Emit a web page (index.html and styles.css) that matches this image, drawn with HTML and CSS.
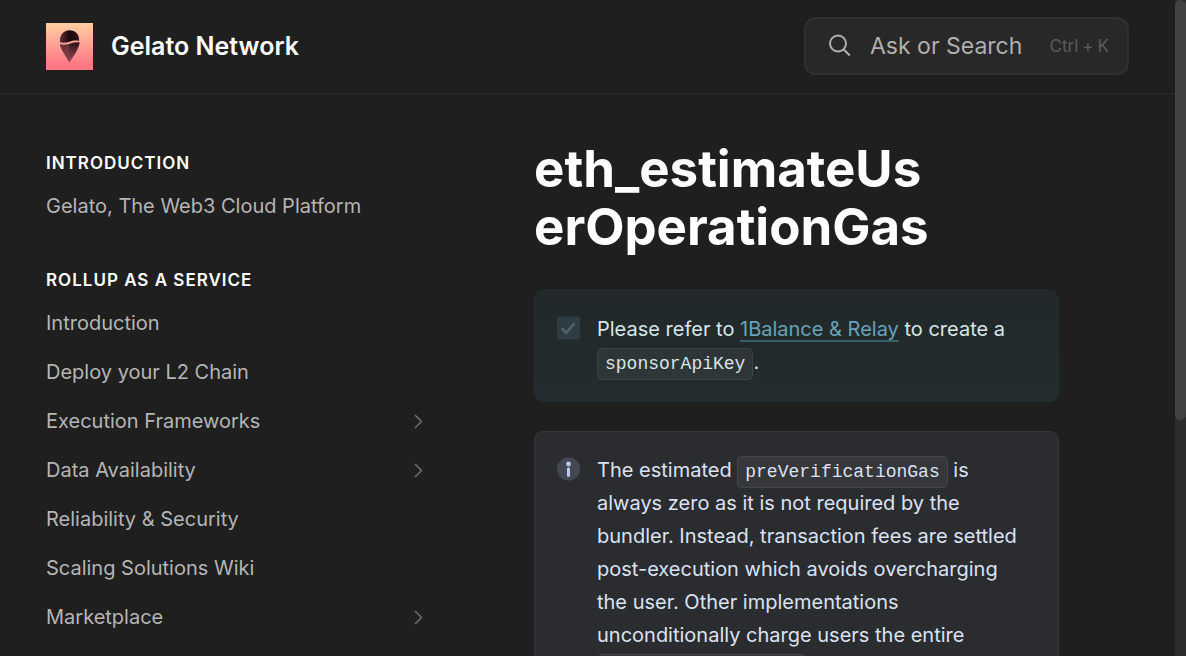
FILE: index.html
```html
<!DOCTYPE html>
<html lang="en">
<head>
<meta charset="utf-8">
<meta name="viewport" content="width=device-width, initial-scale=1">
<title>eth_estimateUserOperationGas | Gelato Network</title>
<link rel="stylesheet" href="styles.css">
</head>
<body>
<div class="page">
  <header class="header">
    <a class="brand" href="#">
      <svg class="logo" viewBox="0 0 47 47" aria-hidden="true">
        <defs>
          <linearGradient id="sky" x1="0" y1="0" x2="0" y2="1"><stop offset="0" stop-color="#ffcfa3"/><stop offset=".9" stop-color="#ff7685"/></linearGradient>
          <linearGradient id="scoop" x1="0" y1="0" x2="1" y2="0"><stop offset="0" stop-color="#5c3036"/><stop offset=".5" stop-color="#1c070c"/><stop offset="1" stop-color="#321419"/></linearGradient>
          <linearGradient id="cone" x1="0" y1="0" x2="0" y2="1"><stop offset="0" stop-color="#30151a"/><stop offset="1" stop-color="#9c4855"/></linearGradient>
        </defs>
        <path fill="url(#sky)" d="M0 0h47v47H0z"/>
        <path fill="url(#scoop)" d="M14 19.300C13.300 12.300 17.400 7.300 23.500 7.300s10 4.500 9.600 10.600c-4-.8-6.400-.2-9.600.9-3.600 1.200-6 1.300-9.500.5z"/>
        <path fill="url(#cone)" d="M14 21.200c4 1 7.300.5 10.500-.7 3.200-1.100 6-1.500 9.200-.9-.5 4.400-3.200 8.600-5.200 12.200L23.300 39.500 17.500 29.500c-1.700-3-3.200-5.500-3.500-8.300z"/>
        <path fill="#7d4148" opacity=".65" d="M14.500 21.500c3 .7 5.600.5 8.500-.4l.2 17.400-5.500-9.300c-1.600-2.700-2.900-5-3.200-7.700z"/>
      </svg>
      <span class="brand-name">Gelato Network</span>
    </a>
    <button class="search" type="button">
      <svg class="search-icon" viewBox="0 0 24 24" aria-hidden="true"><circle cx="10" cy="9.500" r="8"/><path d="m15.800 15.500 6 6"/></svg>
      <span class="search-label">Ask or Search</span>
      <span class="search-keys"><span>Ctrl</span><span>+</span><span>K</span></span>
    </button>
  </header>
  <div class="columns">
    <nav class="sidebar" aria-label="Documentation">
      <section class="group">
        <h2 class="group-title">INTRODUCTION</h2>
        <a class="nav-link" href="#">Gelato, The Web3 Cloud Platform</a>
      </section>
      <section class="group">
        <h2 class="group-title">ROLLUP AS A SERVICE</h2>
        <a class="nav-link" href="#">Introduction</a>
        <a class="nav-link" href="#">Deploy your L2 Chain</a>
        <a class="nav-link" href="#">Execution Frameworks<svg class="chevron" viewBox="0 0 9 15" aria-hidden="true"><path d="m1 1 6.500 6.500L1 14"/></svg></a>
        <a class="nav-link" href="#">Data Availability<svg class="chevron" viewBox="0 0 9 15" aria-hidden="true"><path d="m1 1 6.500 6.500L1 14"/></svg></a>
        <a class="nav-link" href="#">Reliability &amp; Security</a>
        <a class="nav-link" href="#">Scaling Solutions Wiki</a>
        <a class="nav-link" href="#">Marketplace<svg class="chevron" viewBox="0 0 9 15" aria-hidden="true"><path d="m1 1 6.500 6.500L1 14"/></svg></a>
      </section>
    </nav>
    <main class="content">
      <h1 class="title">eth_estimateUserOperationGas</h1>
      <div class="hint hint-success">
        <svg class="hint-icon" viewBox="0 0 24 24" aria-hidden="true"><rect width="24" height="24" rx="3" fill="#2d3d43"/><path d="m5 12.500 4.500 4.500 9-10" fill="none" stroke="#4b646c" stroke-width="2.800"/></svg>
        <p class="hint-text">Please refer to <a class="link" href="#">1Balance &amp; Relay</a> to create a <code class="code">sponsorApiKey</code>.</p>
      </div>
      <div class="hint hint-info">
        <svg class="hint-icon" viewBox="0 0 24 24" aria-hidden="true"><circle cx="12" cy="12" r="12" fill="#434852"/><circle cx="12" cy="6.800" r="2.500" fill="#b9ccec"/><rect x="10.400" y="10.500" width="3.200" height="9.500" rx="1.300" fill="#b9ccec"/></svg>
        <p class="hint-text">The estimated <code class="code">preVerificationGas</code> is always zero as it is not required by the bundler. Instead, transaction fees are settled post-execution which avoids overcharging the user. Other implementations unconditionally charge users the entire <code class="code">preVerificationGas</code></p>
      </div>
    </main>
  </div>
</div>
<div class="scroll-track" aria-hidden="true"><div class="scroll-thumb"></div></div>
</body>
</html>
```
FILE: styles.css
```css
* { box-sizing: border-box; }

body {
  margin: 0;
  height: 100vh;
  overflow: hidden;
  display: flex;
  background: #1f1f1f;
  color: #fff;
  font-family: Inter, "Liberation Sans", sans-serif;
  font-size: 20px;
}

a { color: inherit; text-decoration: none; }

.page { flex: 1; min-width: 0; }

.header {
  display: flex;
  align-items: center;
  justify-content: space-between;
  padding: 17px 46px 18px;
  border-bottom: 2px solid #262626;
}

.brand { display: flex; align-items: center; gap: 18px; }
.logo { width: 47px; height: 47px; }
.brand-name { font-size: 25px; font-weight: 600; line-height: 32px; }

.search {
  display: flex;
  align-items: center;
  width: 325px;
  height: 58px;
  padding: 0 18px 0 22px;
  border: 2px solid #303030;
  border-radius: 12px;
  background: #282828;
  color: #b0b0b0;
  font: inherit;
}
.search-icon { width: 24px; height: 24px; fill: none; stroke: currentColor; stroke-width: 2; }
.search-label { margin-left: 18px; font-size: 23px; }
.search-keys { display: flex; gap: 4px; margin-left: auto; color: #5c5c5c; font-size: 17px; }

.columns { display: flex; gap: 93px; padding: 45px 116px 0 46px; }

.sidebar { width: 395px; flex: none; padding-top: 10px; }
.group { margin-bottom: 36px; }
.group-title { margin: 0 0 6px; font-size: 17px; font-weight: 600; line-height: 26px; letter-spacing: 1px; }
.nav-link {
  display: flex;
  align-items: center;
  justify-content: space-between;
  padding: 10px 18px 10px 0;
  color: #b5b5b5;
  line-height: 29px;
}
.chevron { width: 9px; height: 15px; fill: none; stroke: #6e6e6e; stroke-width: 1.500; }

.content { flex: 1; min-width: 0; }
.title {
  max-width: 400px;
  margin: 0 0 34px;
  font-size: 51px;
  font-weight: 700;
  line-height: 58px;
  overflow-wrap: anywhere;
}

.hint {
  display: flex;
  gap: 17px;
  margin-bottom: 29px;
  padding: 22px 30px 22px 22px;
  border: 1px solid;
  border-radius: 9px;
}
.hint-success { background: linear-gradient(#22282a, #232c2e); border-color: #222d2e; color: #d9e6e8; }
.hint-info { background: #2b2c30; border-color: #33363b; color: #dbe2f3; }
.hint-icon { flex: none; width: 23px; height: 24px; margin-top: 3px; }
.hint-text { margin: 0; line-height: 33px; }
.link { color: #66a3b8; text-decoration: underline #38606c 2px; text-underline-offset: 4px; }
.code {
  padding: 5px 7px;
  border: 1px solid rgba(255, 255, 255, 0.07);
  border-radius: 5px;
  background: rgba(255, 255, 255, 0.055);
  font-family: "Liberation Mono", monospace;
  font-size: 18px;
  line-height: 20px;
}

.scroll-track { width: 11px; flex: none; background: #2c2c2c; }
.scroll-thumb { height: 64%; border-radius: 6px; background: #424242; }
```
